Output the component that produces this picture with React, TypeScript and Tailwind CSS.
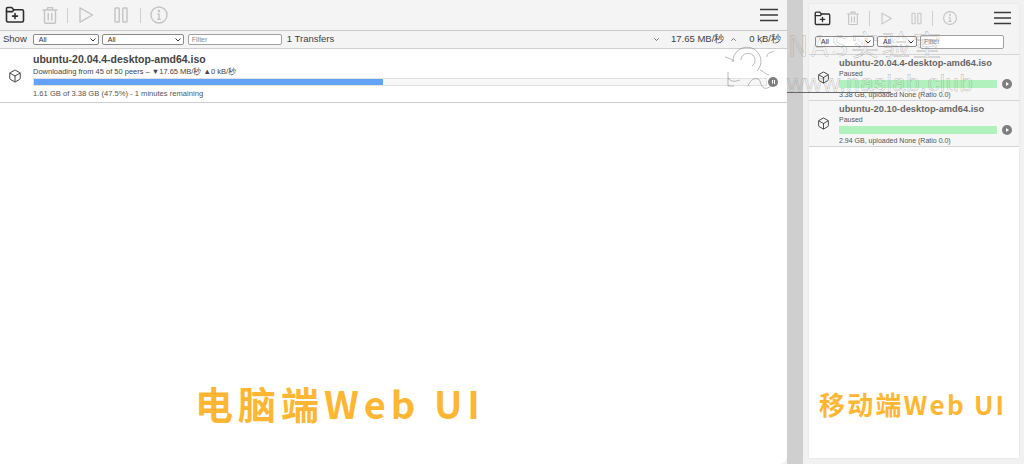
import React from 'react';
import { Box } from 'lucide-react';

const SANS = 'font-["Liberation_Sans",Arial,sans-serif]';

const FolderPlusIcon = ({ size = 20 }: { size?: number }) => (
  <svg width={size} height={size} viewBox="0 0 20 20" fill="none" stroke="#2f2f2f" strokeWidth="1.6" strokeLinejoin="round" strokeLinecap="round">
    <path d="M1.5 3.5a1 1 0 0 1 1-1h4.2l2 2.2h8.3a1.5 1.5 0 0 1 1.5 1.5v9.3a1.5 1.5 0 0 1-1.5 1.5H3a1.5 1.5 0 0 1-1.5-1.5z" />
    <path d="M1.5 6.6H7.6l1.3-1.9" />
    <path d="M10 8.6v5M7.5 11.1h5" />
  </svg>
);

const TrashIcon = ({ size = 20 }: { size?: number }) => (
  <svg width={size} height={size} viewBox="0 0 20 20" fill="none" stroke="#c4c4c4" strokeWidth="1.4" strokeLinejoin="round" strokeLinecap="round">
    <path d="M3 5h14M7.5 5V2.6h5V5M4.5 5v12.2a1 1 0 0 0 1 1h9a1 1 0 0 0 1-1V5" />
    <path d="M8.2 8.5v6.5M11.8 8.5v6.5" />
  </svg>
);

const PlayIcon = ({ size = 20 }: { size?: number }) => (
  <svg width={size} height={size} viewBox="0 0 20 20" fill="none" stroke="#c4c4c4" strokeWidth="1.4" strokeLinejoin="round">
    <path d="M4 2.8v14.4L16.5 10z" />
  </svg>
);

const PauseIcon = ({ size = 20 }: { size?: number }) => (
  <svg width={size} height={size} viewBox="0 0 20 20" fill="none" stroke="#c4c4c4" strokeWidth="1.4" strokeLinejoin="round">
    <rect x="4" y="3" width="4.2" height="14" rx="0.6" />
    <rect x="11.8" y="3" width="4.2" height="14" rx="0.6" />
  </svg>
);

const InfoIcon = ({ size = 20 }: { size?: number }) => (
  <svg width={size} height={size} viewBox="0 0 20 20" fill="none" stroke="#c4c4c4" strokeWidth="1.4" strokeLinecap="round">
    <circle cx="10" cy="10" r="8" />
    <path d="M10 9v5M8.7 14.2h2.6M8.9 9h1.1" />
    <circle cx="10" cy="6" r="0.6" fill="#c4c4c4" />
  </svg>
);

const MenuIcon = ({ width }: { width: number }) => (
  <svg width={width} height="14" viewBox="0 0 18 14" fill="none" stroke="#3a3a3a" strokeWidth="1.7" preserveAspectRatio="none">
    <path d="M0 1.5h18M0 7h18M0 12.5h18" />
  </svg>
);

const Divider = () => <div className="h-[15px] w-px bg-[#cfcfcf]" />;

const Toolbar = ({ compact }: { compact?: boolean }) =>
  compact ? (
    <div className="flex h-[28px] items-center bg-[#f4f4f4] pl-[5px] pr-[8px]">
      <FolderPlusIcon size={17} />
      <span className="ml-[14px]"><TrashIcon size={16} /></span>
      <span className="ml-[8px]"><Divider /></span>
      <span className="ml-[9px]"><PlayIcon size={15} /></span>
      <span className="ml-[15px]"><PauseIcon size={15} /></span>
      <span className="ml-[8px]"><Divider /></span>
      <span className="ml-[9px]"><InfoIcon size={16} /></span>
      <span className="ml-auto"><MenuIcon width={17} /></span>
    </div>
  ) : (
    <div className="flex h-[31px] items-center border-b border-[#c9c9c9] bg-[#f4f4f4] pl-[5px] pr-[9px]">
      <FolderPlusIcon />
      <span className="ml-[15px]"><TrashIcon /></span>
      <span className="ml-[7px]"><Divider /></span>
      <span className="ml-[8px]"><PlayIcon /></span>
      <span className="ml-[15px]"><PauseIcon /></span>
      <span className="ml-[9px]"><Divider /></span>
      <span className="ml-[8px]"><InfoIcon /></span>
      <span className="ml-auto"><MenuIcon width={18} /></span>
    </div>
  );

const FakeSelect = ({ width }: { width: string }) => (
  <div className={`flex h-[11px] items-center justify-between rounded-[2px] border border-[#8a8a8a] bg-white pl-[5px] pr-[2px] text-[7px] leading-none text-[#333] ${width}`}>
    <span>All</span>
    <svg width="6" height="4" viewBox="0 0 6 4" fill="none" stroke="#333" strokeWidth="1">
      <path d="M0.5 0.5 3 3l2.5-2.5" />
    </svg>
  </div>
);

const Caret = ({ up }: { up?: boolean }) => (
  <svg width="5" height="3" viewBox="0 0 5 3" fill="none" stroke="#666" strokeWidth="0.9">
    <path d={up ? 'M0.3 2.7 2.5 0.5l2.2 2.2' : 'M0.3 0.3 2.5 2.5 4.7 0.3'} />
  </svg>
);

const FilterBar = () => (
  <div className="flex h-[18px] items-center border-b border-[#cfcfcf] bg-[#f4f4f4] text-[9.5px] text-[#3f3f3f]">
    <span className="ml-[3px]">Show</span>
    <span className="ml-[6px]"><FakeSelect width="w-[66px]" /></span>
    <span className="ml-[3px]"><FakeSelect width="w-[82px]" /></span>
    <div className="ml-[4px] flex h-[11px] w-[94px] items-center rounded-[2px] border border-[#a0a0a0] bg-white pl-[3px] text-[7px] leading-none text-[#8c8c8c]">Filter</div>
    <span className="ml-[5px]">1 Transfers</span>
    <span className="ml-auto"><Caret /></span>
    <span className="ml-[12px]">17.65 MB/秒</span>
    <span className="ml-[7px]"><Caret up /></span>
    <span className="ml-[13px] mr-[6px]">0 kB/秒</span>
  </div>
);

const DesktopRow = () => (
  <div className="flex h-[54px] border-b border-[#cdcdcd] bg-white">
    <div className="flex w-[33px] shrink-0 items-center justify-center pr-[4px] pt-[1px]">
      <Box size={14} strokeWidth={1.6} color="#333" />
    </div>
    <div className="min-w-0 flex-1 pr-[9px] pt-[4px]">
      <div className="text-[10.5px] font-bold leading-[13px] text-[#444]">ubuntu-20.04.4-desktop-amd64.iso</div>
      <div className="mt-[1px] text-[7.5px] leading-[9px] text-[#444]">Downloading from 45 of 50 peers – ▼17.65 MB/秒 ▲0 kB/秒</div>
      <div className="mt-[1px] flex items-center gap-[1px]">
        <div className="h-[8px] flex-1 border border-[#e2e2e2] bg-[#f6f6f6]">
          <div className="h-full w-[47.7%] bg-[#64a2f6]" />
        </div>
        <div className="flex h-[10px] w-[10px] items-center justify-center rounded-full bg-[#7f7f7f]">
          <div className="h-[4px] w-[3px] border-x border-white" />
        </div>
      </div>
      <div className="mt-[2px] text-[7.6px] leading-[9px] text-[#555]">1.61 GB of 3.38 GB (47.5%) - 1 minutes remaining</div>
    </div>
  </div>
);

const MobileRow = ({ name, total }: { name: string; total: string }) => (
  <div className="flex h-[46px] border-b border-[#d4d4d4] bg-[#f6f6f6]">
    <div className="flex w-[30px] shrink-0 items-center justify-center pr-[2px]">
      <Box size={13} strokeWidth={1.6} color="#333" />
    </div>
    <div className="min-w-0 flex-1 pr-[7px] pt-[2px]">
      <div className="text-[9.3px] font-bold leading-[12px] text-[#666]">{name}</div>
      <div className="text-[7px] leading-[9px] text-[#555]">Paused</div>
      <div className="mt-[1px] flex items-center gap-[5px]">
        <div className="h-[8px] flex-1 rounded-[1px] bg-[#b1f1bd]" />
        <div className="flex h-[10px] w-[10px] items-center justify-center rounded-full bg-[#7f7f7f]">
          <div className="ml-[1px] h-0 w-0 border-y-[2px] border-l-[3px] border-y-transparent border-l-white" />
        </div>
      </div>
      <div className="mt-[1px] text-[7px] leading-[9px] text-[#555]">{total}, uploaded None (Ratio 0.0)</div>
    </div>
  </div>
);

// Outlined site watermark that lies over both panels
const Watermark = () => (
  <div className="pointer-events-none absolute left-[720px] top-[28px] h-[70px] w-[270px]">
    <svg className="absolute left-0 top-0" width="60" height="66" viewBox="0 0 60 66" fill="none" stroke="#777" strokeWidth="0.5">
      <path d="M13 34a14 14 0 1 1 24 9" />
      <path d="M21 32a7 7 0 1 1 11 6" />
      <path d="M5 29c4 1 6 2 9 4M45 8c-1 4-3 4-4 8M54 23c-3 2-7 1-7 6M40 42c3 1 5 4 9 5" />
      <path d="M8 50c4 5 8 3 12 2M28 58c3-7 6-8 10-7 3 1 2 7 6 9 3 1 7-1 9-5" />
      <path d="M8 44v14h6" />
    </svg>
    <div className='absolute left-[68px] top-[2px] whitespace-nowrap font-["Noto_Sans_CJK_SC",sans-serif] text-[28px] leading-[28px] tracking-[3px] text-transparent [-webkit-text-stroke:0.25px_#888]'>NAS实验室</div>
    <div className="absolute left-[67px] top-[43px] whitespace-nowrap text-[24px] leading-[24px] tracking-[0.5px] text-transparent [-webkit-text-stroke:0.25px_#888]">www.naslab.club</div>
    <div className="absolute left-[67px] top-[64px] h-px w-[104px] bg-[#666]" />
  </div>
);

const CAPTION = 'font-["Noto_Sans_CJK_SC","Noto_Sans",sans-serif] font-bold text-[#ffb733] whitespace-nowrap';

export default function App() {
  return (
    <div className={`relative flex h-[464px] w-[1024px] overflow-hidden bg-[#f1f1f1] ${SANS}`}>
      {/* Desktop web UI */}
      <div className="flex w-[787px] shrink-0 flex-col overflow-hidden rounded-br-[8px] bg-white">
        <Toolbar />
        <FilterBar />
        <DesktopRow />
        <div className="flex-1 pl-[195px] pt-[274px]">
          <div className={`${CAPTION} text-[38px] leading-[52px] tracking-[5px]`}>电脑端Web UI</div>
        </div>
      </div>

      <div className="w-[16px] shrink-0 bg-[#cfcfcf]" />

      {/* Mobile web UI */}
      <div className="flex w-[221px] shrink-0 flex-col pb-[6px] pl-[6px] pr-[5px] pt-[4px]">
        <div className="flex h-full flex-col bg-white shadow-[0_0_2px_rgba(0,0,0,0.08)]">
          <Toolbar compact />
          <div className="flex h-[23px] items-start gap-[3px] border-b border-[#d4d4d4] bg-[#f4f4f4] pl-[6px] pt-[4px]">
            <FakeSelect width="w-[59px]" />
            <FakeSelect width="w-[40px]" />
            <div className="mt-[-1px] h-[14px] w-[84px] rounded-[2px] border border-[#a0a0a0] bg-white pl-[3px] text-[7px] leading-[12px] text-[#8c8c8c]">Filter</div>
          </div>
          <MobileRow name="ubuntu-20.04.4-desktop-amd64.iso" total="3.38 GB" />
          <MobileRow name="ubuntu-20.10-desktop-amd64.iso" total="2.94 GB" />
          <div className="flex-1 pl-[10px] pt-[239px]">
            <div className={`${CAPTION} text-[26px] leading-[36px] tracking-[2.2px]`}>移动端Web UI</div>
          </div>
        </div>
      </div>

      <Watermark />
    </div>
  );
}
